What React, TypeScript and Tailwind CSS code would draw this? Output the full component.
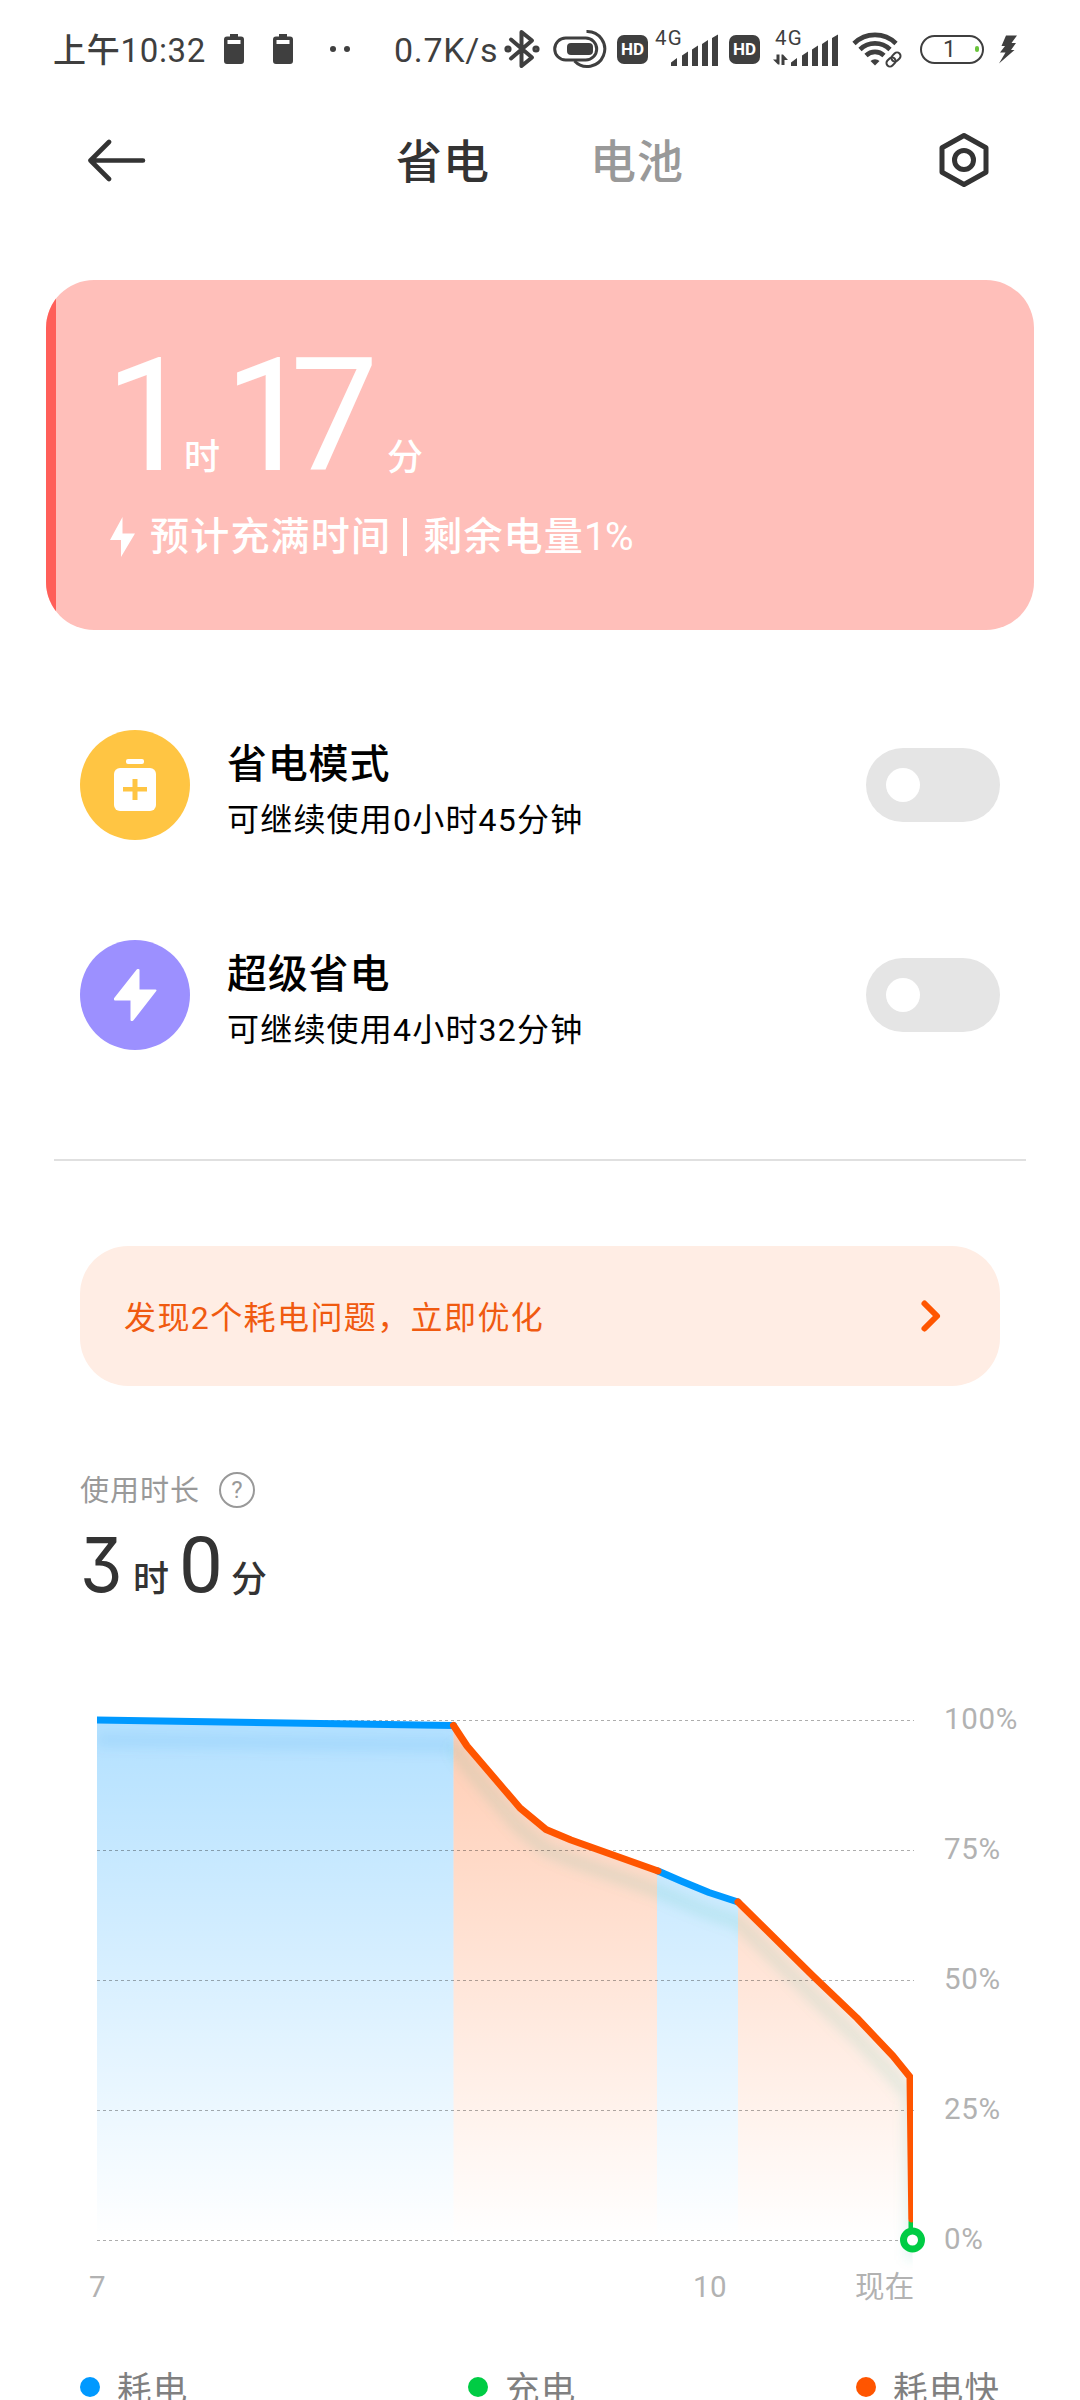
import type { ReactNode } from "react";

const INK = "#3f3f3f";

/* ---------- status bar ---------- */

function MiniBattery() {
  return (
    <svg width="20" height="30" viewBox="0 0 20 30" fill={INK}>
      <path d="M6 0h8v2.500h3a3 3 0 0 1 3 3V27a3 3 0 0 1-3 3H3a3 3 0 0 1-3-3V5.500a3 3 0 0 1 3-3h3z" />
      <rect x="3.500" y="6" width="13" height="4" fill="#fff" />
    </svg>
  );
}

function Bluetooth() {
  return (
    <svg width="36" height="40" viewBox="0 0 36 40" fill="none" stroke={INK} strokeWidth="4" strokeLinejoin="round" strokeLinecap="round">
      <path d="M7 10.500L28 28.500L17.500 37V3L28 11.500L7 29.500" />
      <circle cx="4" cy="20" r="1.600" />
      <circle cx="32" cy="20" r="1.600" />
    </svg>
  );
}

function DualPill() {
  return (
    <svg width="54" height="40" viewBox="0 0 54 40" fill="none" stroke={INK} strokeWidth="3">
      <rect x="1.700" y="9" width="42" height="22" rx="11" />
      <rect x="14" y="14" width="26" height="12" rx="4" fill={INK} stroke="none" />
      <path d="M33.500 2.500a17.500 17.500 0 1 1-12 29.500" />
    </svg>
  );
}

function HdBadge() {
  return (
    <span className="flex h-[29px] w-[31px] items-center justify-center rounded-[7px] bg-[#3f3f3f] pt-px font-['Roboto',sans-serif] text-[17px] leading-none font-bold text-white">
      HD
    </span>
  );
}

function Signal({ arrows = false }: { arrows?: boolean }) {
  return (
    <div className="relative h-[40px] w-[66px]">
      <span className="absolute top-[-1px] left-[2px] text-[20.500px] leading-none tracking-[1.200px]">4G</span>
      <svg className="absolute inset-0" width="66" height="40" viewBox="0 0 66 40" fill={INK}>
        <path d="M18 33.500l6-4.500v8h-6zM29 26.500l6-4v14.500h-6zM39 20.500l6-4v20.500h-6zM49 15l6-4v26h-6zM59 9l6-3.500V37h-6z" />
        {arrows && <path d="M0 30.500l3.500 0V25.500h3V35.500h-1.500zM8.500 25.500h1.500L15 31h-3.500v5h-3z" />}
      </svg>
    </div>
  );
}

function Wifi() {
  return (
    <svg width="52" height="40" viewBox="0 0 52 40" fill="none" stroke={INK} strokeWidth="4.600">
      <path d="M2 14.500a30 30 0 0 1 42 0" />
      <path d="M8 20.500a21.500 21.500 0 0 1 30 0" />
      <path d="M14 26.500a13 13 0 0 1 18 0" />
      <path d="M18.500 32a6.500 6.500 0 0 1 9 0L23 36.500z" fill={INK} stroke="none" />
      <g strokeWidth="2" transform="rotate(-45 41.500 30.500)">
        <rect x="33" y="27" width="10" height="7" rx="3.500" />
        <rect x="40" y="27" width="10" height="7" rx="3.500" />
      </g>
    </svg>
  );
}

function StatusBar() {
  return (
    <div className="flex h-[98px] shrink-0 items-center pl-[53px] text-[#3f3f3f]">
      <div className="w-[171px] shrink-0 pt-[2px] text-[33px] leading-none font-[450] tracking-[0.700px] whitespace-nowrap">上午10:32</div>
      <MiniBattery />
      <div className="ml-[29px] flex"><MiniBattery /></div>
      <div className="ml-[37px] flex w-[64px] gap-[8px]">
        <span className="h-[6px] w-[6px] rounded-full bg-[#3f3f3f]" />
        <span className="h-[6px] w-[6px] rounded-full bg-[#3f3f3f]" />
      </div>
      <div className="w-[110px] shrink-0 pt-px text-[34px] leading-none font-[450] tracking-[0.700px] whitespace-nowrap">0.7K/s</div>
      <Bluetooth />
      <div className="ml-[13px] flex"><DualPill /></div>
      <div className="ml-[10px] flex"><HdBadge /></div>
      <div className="ml-[5px] flex"><Signal /></div>
      <div className="ml-[10px] flex"><HdBadge /></div>
      <div className="ml-[13px] flex"><Signal arrows /></div>
      <div className="ml-[13px] flex"><Wifi /></div>
      <div className="relative ml-[16px] flex h-[29px] w-[64px] items-center justify-center rounded-full border-[2.500px] border-[#3f3f3f] pr-[5px] text-[23px] leading-none">
        1
        <span className="absolute right-[3px] h-[6px] w-[4px] rounded-[2px] bg-[#6ac43c]" />
      </div>
      <svg className="ml-[14px]" width="20" height="29" viewBox="0 0 20 29" fill={INK}>
        <path d="M8 0.500h11l-5.500 7.500h4.500l-5 7h3.500L1 28.500 7.500 17.500H2L7 11H3.500z" />
      </svg>
    </div>
  );
}

/* ---------- header ---------- */

function Header() {
  return (
    <header className="flex h-[124px] shrink-0 items-center pl-[87px] text-[46px] leading-none">
      <svg width="60" height="44" viewBox="0 0 60 44" fill="none" stroke="#333" strokeWidth="4.600" strokeLinecap="round" strokeLinejoin="round">
        <path d="M56 22.500H3.500M22 4L3.500 22.500L22 41" />
      </svg>
      <h1 className="ml-[249px] w-[194px] pt-[3px] font-medium tracking-[1px] text-[#333]">省电</h1>
      <span className="w-[347px] pt-[3px] font-medium tracking-[1px] text-[#999]">电池</span>
      <svg width="54" height="56" viewBox="0 0 54 56" fill="none" stroke="#333" strokeWidth="5" strokeLinejoin="round">
        <path d="M27 3.500L49 15.800V40.200L27 52.500L5 40.200V15.800Z" />
        <circle cx="27" cy="28" r="9.500" />
      </svg>
    </header>
  );
}

/* ---------- charge card ---------- */

function ChargeCard() {
  return (
    <section className="relative mt-[58px] ml-[46px] flex h-[350px] w-[988px] shrink-0 flex-col overflow-hidden rounded-[48px] bg-[#ffbfba] text-white">
      <div className="absolute inset-y-0 left-0 w-[10px] bg-[#ff5f59]" />
      <div className="mt-[57px] flex h-[158px] items-baseline pl-[59px] leading-[158px]">
        <span className="w-[79px] text-[157px] font-[450] tracking-[-20px]">1</span>
        <span className="w-[40px] text-[36px] font-medium">时</span>
        <span className="w-[163px] text-[157px] font-[450] tracking-[-22px]">17</span>
        <span className="text-[36px] font-medium">分</span>
      </div>
      <div className="mt-[22px] flex h-[40px] items-center pl-[64px] text-[39px] leading-none whitespace-nowrap">
        <svg width="25" height="40" viewBox="0 0 25 40" fill="#fff">
          <path d="M12.500 0V16.500H25L11 40V23H0Z" />
        </svg>
        <span className="ml-[15px] font-medium tracking-[1.200px]">预计充满时间</span>
        <span className="mr-[16px] ml-[12px] h-[38px] w-[4px] bg-white" />
        <span className="font-medium tracking-[1.200px]">剩余电量</span>
        <span className="font-[450] tracking-[-1px]">1%</span>
      </div>
    </section>
  );
}

/* ---------- power modes ---------- */

function ModeRow({ icon, color, title, note }: { icon: ReactNode; color: string; title: string; note: string }) {
  return (
    <div className="flex h-[110px] shrink-0 items-center pr-[80px] pl-[80px] text-black">
      <div className={"flex h-[110px] w-[110px] items-center justify-center rounded-full " + color}>{icon}</div>
      <div className="ml-[37px] flex-1 whitespace-nowrap">
        <div className="h-[50px] pt-[8px] text-[40px] leading-[40px] font-medium tracking-[0.800px]">{title}</div>
        <div className="h-[46px] pt-[13px] text-[32px] leading-[40px] tracking-[1.200px]">{note}</div>
      </div>
      <div className="flex h-[74px] w-[134px] items-center rounded-full bg-[#e5e5e5] pl-[20px]">
        <span className="h-[34px] w-[34px] rounded-full bg-white" />
      </div>
    </div>
  );
}

function BatteryPlus() {
  return (
    <svg width="42" height="52" viewBox="0 0 42 52" fill="#fff">
      <rect x="12" y="0" width="18" height="5" rx="2" />
      <rect x="0" y="9" width="42" height="43" rx="6" />
      <path d="M9 28h24v4.600H9zM18.500 20h5v21h-5z" fill="#ffc543" />
    </svg>
  );
}

function Bolt() {
  return (
    <svg width="44" height="54" viewBox="0 0 44 54" fill="#fff" stroke="#fff" strokeWidth="2" strokeLinejoin="round">
      <path d="M25.500 2V22.500H42.500L19.500 52H18.500V31.500H2V30.500L24.500 2Z" />
    </svg>
  );
}

/* ---------- usage chart ---------- */

const LINE =
  "M97 1720L453.500 1725.500L467 1746L520 1808L546 1829.500L571 1840L658 1871L681 1881L709 1892.500L738 1902L813 1976L857 2018L893 2056L910 2077L912 2240";

const AREAS = [
  { d: "M97 1720L453.500 1725.500V2240H97Z", fill: "url(#drain)" },
  { d: "M453.500 1725.500L467 1746L520 1808L546 1829.500L571 1840L657 1871V2240H453.500Z", fill: "url(#fast)" },
  { d: "M657 1871L681 1881L709 1892.500L738 1902V2240H657Z", fill: "url(#drain)" },
  { d: "M738 1902L813 1976L857 2018L893 2056L910 2077L912 2240H738Z", fill: "url(#fast)" },
];

const GRID = [
  { y: 1720.5, label: "100%" },
  { y: 1850.5, label: "75%" },
  { y: 1980.5, label: "50%" },
  { y: 2110.5, label: "25%" },
  { y: 2240.5, label: "0%" },
];

function Chart() {
  return (
    <div className="flex h-[570px] shrink-0 pl-[80px]">
      <svg width="850" height="570" viewBox="80 1700 850 570" fill="none" className="shrink-0">
        <defs>
          <linearGradient id="drain" gradientUnits="userSpaceOnUse" x1="0" y1="1720" x2="0" y2="2240">
            <stop offset="0" stopColor="#0099ff" stopOpacity="0.3" />
            <stop offset="1" stopColor="#0099ff" stopOpacity="0" />
          </linearGradient>
          <linearGradient id="fast" gradientUnits="userSpaceOnUse" x1="0" y1="1720" x2="0" y2="2240">
            <stop offset="0" stopColor="#ff5500" stopOpacity="0.3" />
            <stop offset="1" stopColor="#ff5500" stopOpacity="0" />
          </linearGradient>
          <filter id="soft" filterUnits="userSpaceOnUse" x="80" y="1690" width="850" height="600">
            <feGaussianBlur stdDeviation="6" />
          </filter>
          <clipPath id="plot">
            <rect x="97" y="1700" width="816" height="570" />
          </clipPath>
          <clipPath id="under">
            <path d={LINE + "L913 2270H97Z"} />
          </clipPath>
        </defs>
        {AREAS.map((a) => (
          <path key={a.d} d={a.d} fill={a.fill} />
        ))}
        <g clipPath="url(#under)">
          <path d="M97 1720L453.500 1725.500" stroke="#0088dd" strokeOpacity="0.09" strokeWidth="14" filter="url(#soft)" transform="translate(0 20)" />
          <path d={LINE.replace("M97 1720L", "M")} stroke="#20a880" strokeOpacity="0.1" strokeWidth="14" filter="url(#soft)" transform="translate(0 20)" />
        </g>
        {GRID.map((g) => (
          <line key={g.y} x1="97" x2="914" y1={g.y} y2={g.y} stroke="#000" strokeOpacity="0.32" strokeDasharray="3 3" />
        ))}
        <g clipPath="url(#plot)" strokeWidth="7" strokeLinejoin="round" strokeLinecap="round">
          <path d="M912 2222V2240" stroke="#00cc44" />
          <path d="M96 1720L453.500 1725.500M658 1871L681 1881L709 1892.500L738 1902" stroke="#0099ff" />
          <path d="M453.500 1725.500L467 1746L520 1808L546 1829.500L571 1840L658 1871M738 1902L813 1976L857 2018L893 2056L910 2077L911.800 2219" stroke="#ff5500" />
        </g>
        <circle cx="912.500" cy="2240" r="9" fill="#fff" stroke="#00cc44" strokeWidth="7" />
      </svg>
      <div className="ml-[14px] flex flex-col text-[29.500px] leading-none tracking-[0.700px] text-[#b2b2b2]">
        {GRID.map((g) => (
          <span key={g.label} className="h-[130px] shrink-0 pt-[5px]">{g.label}</span>
        ))}
      </div>
    </div>
  );
}

function Legend({ color, label }: { color: string; label: string }) {
  return (
    <div className="flex w-[388px] shrink-0 items-center text-[34.500px] leading-none tracking-[1.200px] text-[#808080]">
      <span className={"mr-[17px] h-[20px] w-[20px] rounded-full " + color} />
      <span className="pt-[4px]">{label}</span>
    </div>
  );
}

export default function App() {
  return (
    <div className="flex h-[2400px] w-[1080px] flex-col overflow-hidden bg-white font-['Roboto','Noto_Sans_CJK_SC',sans-serif]">
      <StatusBar />
      <Header />
      <ChargeCard />

      <div className="mt-[100px] flex flex-col gap-[100px]">
        <ModeRow color="bg-[#ffc543]" icon={<BatteryPlus />} title="省电模式" note="可继续使用0小时45分钟" />
        <ModeRow color="bg-[#9c90ff]" icon={<Bolt />} title="超级省电" note="可继续使用4小时32分钟" />
      </div>

      <div className="mx-[54px] mt-[109px] h-[2px] shrink-0 bg-[#e0e0e0]" />

      <div className="mx-[80px] mt-[85px] flex h-[140px] shrink-0 items-center rounded-[48px] bg-[#ffede4] pr-[58px] pl-[44px] text-[#f05a10]">
        <span className="flex-1 pt-[3px] text-[32px] leading-none tracking-[1.400px] whitespace-nowrap">发现2个耗电问题，立即优化</span>
        <svg width="24" height="34" viewBox="0 0 24 34" fill="none" stroke="#ff5500" strokeWidth="6" strokeLinecap="round" strokeLinejoin="round">
          <path d="M6.500 4.500L19 17L6.500 29.500" />
        </svg>
      </div>

      <div className="mt-[84px] flex h-[40px] shrink-0 items-center pl-[80px] text-[#999]">
        <span className="pt-[3px] text-[29px] leading-none tracking-[1px]">使用时长</span>
        <span className="ml-[19px] flex h-[36px] w-[36px] items-center justify-center rounded-full border-[2.500px] border-[#999] text-[24px] leading-none">?</span>
      </div>

      <div className="mt-[9px] flex h-[90px] shrink-0 items-baseline pl-[80px] leading-[90px] text-[#333]">
        <span className="inline-block w-[53px] origin-left scale-x-[0.9] font-['Inter',sans-serif] text-[76px] [font-feature-settings:'cv09']">3</span>
        <span className="w-[46px] text-[36px] font-medium">时</span>
        <span className="w-[52px] text-[78px]">0</span>
        <span className="text-[36px] font-medium">分</span>
      </div>

      <div className="mt-[91px] flex shrink-0 flex-col">
        <Chart />
        <div className="flex h-[34px] text-[29.500px] leading-[34px] tracking-[0.300px] text-[#b2b2b2]">
          <span className="ml-[89px] w-[604px]">7</span>
          <span className="w-[162px]">10</span>
          <span>现在</span>
        </div>
      </div>

      <div className="mt-[63px] flex h-[40px] shrink-0 items-center pl-[80px]">
        <Legend color="bg-[#0099ff]" label="耗电" />
        <Legend color="bg-[#00cc44]" label="充电" />
        <Legend color="bg-[#ff5500]" label="耗电快" />
      </div>
    </div>
  );
}
